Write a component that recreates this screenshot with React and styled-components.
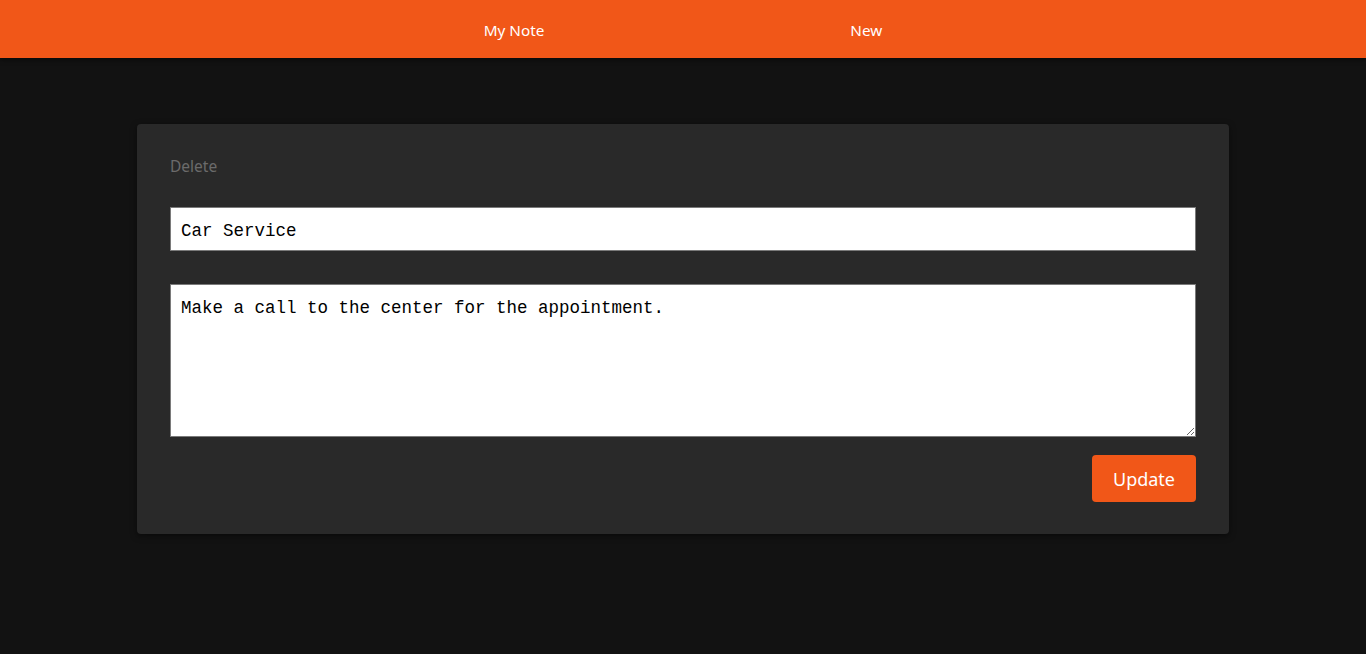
import React from "react";
import styled, { createGlobalStyle } from "styled-components";

const GlobalStyle = createGlobalStyle`
  html, body {
    margin: 0;
    padding: 0;
    background: #121212;
    font-family: "Noto Sans", "Open Sans", sans-serif;
  }
  * { box-sizing: border-box; }
`;

const App = () => {
  return (
    <Page>
      <GlobalStyle />
      <Header>
        <NavLink>My Note</NavLink>
        <NavLink>New</NavLink>
      </Header>
      <Main>
        <Card>
          <DeleteLink>Delete</DeleteLink>
          <TitleInput defaultValue="Car Service" />
          <BodyInput defaultValue="Make a call to the center for the appointment." />
          <Actions>
            <Button>Update</Button>
          </Actions>
        </Card>
      </Main>
    </Page>
  );
};

const Page = styled.div`
  min-height: 654px;
  background: #121212;
`;

const Header = styled.header`
  height: 58px;
  background: #f15718;
  display: flex;
  align-items: center;
  justify-content: center;
  gap: 306px;
  box-shadow: 0 2px 4px rgba(0, 0, 0, 0.5);
`;

const NavLink = styled.a`
  color: #fff;
  font-size: 15.3px;
  cursor: pointer;
  padding-top: 2px;
`;

const Main = styled.main`
  padding-top: 66px;
  display: flex;
  justify-content: center;
`;

const Card = styled.section`
  width: 1092px;
  background: #292929;
  border-radius: 4px;
  padding: 28px 33px 32px 33px;
  box-shadow: 0 2px 6px rgba(0, 0, 0, 0.5);
  display: flex;
  flex-direction: column;
`;

const DeleteLink = styled.a`
  color: #6b6b6b;
  font-size: 15.5px;
  line-height: 28px;
  margin-bottom: 27px;
  cursor: pointer;
`;

const field = `
  width: 100%;
  background: #fff;
  border: 1px solid #7a7a7a;
  color: #000;
  font-family: "Liberation Mono", "DejaVu Sans Mono", monospace;
  font-size: 17.5px;
  padding: 0 10px;
  outline: none;
`;

const TitleInput = styled.input`
  ${field}
  height: 44px;
  padding-top: 3px;
  margin-bottom: 33px;
`;

const BodyInput = styled.textarea`
  ${field}
  height: 153px;
  padding-top: 11px;
  line-height: 24px;
  resize: vertical;
  display: block;
`;

const Actions = styled.div`
  display: flex;
  justify-content: flex-end;
  margin-top: 18px;
`;

const Button = styled.button`
  width: 104px;
  height: 47px;
  border: none;
  border-radius: 4px;
  background: #f15718;
  color: #fff;
  font-family: "Noto Sans", "Open Sans", sans-serif;
  font-size: 18px;
  cursor: pointer;
`;

export default App;
